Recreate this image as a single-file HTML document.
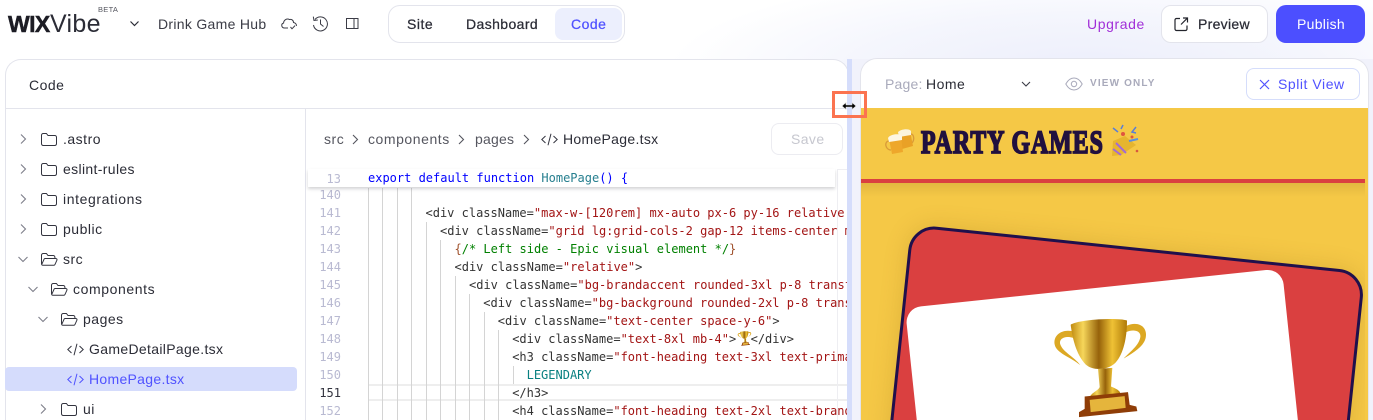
<!DOCTYPE html>
<html><head><meta charset="utf-8">
<style>
html,body{margin:0;padding:0;width:1373px;height:420px;overflow:hidden;background:#fff}
body{position:relative;font-family:"Liberation Sans",sans-serif;color:#2b2c36;font-size:14px;letter-spacing:.5px}
.a{position:absolute}
.t{position:absolute;white-space:nowrap;line-height:18px;height:18px}
.m{-webkit-text-stroke:.25px currentColor}
#code .l{position:absolute;white-space:pre;font-family:"DejaVu Sans Mono",monospace;font-size:12px;letter-spacing:0;line-height:18px;height:18px;color:#333}
#code .n{position:absolute;left:0;width:33px;text-align:right;font-family:"DejaVu Sans Mono",monospace;font-size:12px;letter-spacing:0;line-height:18px;color:#b9bad2}
#code .g{position:absolute;width:1px;background:#d4d4d4}
.s{color:#a31515}.c{color:#008000}.b{color:#a0522d}.k{color:#0000ff}.f{color:#267f8f}
</style></head><body>
<svg width="0" height="0" style="position:absolute"><defs>
<symbol id="fc" viewBox="0 0 16 13"><path d="M.5 2.2A1.7 1.7 0 0 1 2.2.5h3.2l1.6 2h6.800a1.7 1.7 0 0 1 1.7 1.7v6.600a1.7 1.7 0 0 1-1.7 1.7H2.2a1.7 1.7 0 0 1-1.7-1.7z" fill="none" stroke="#33343f"/></symbol>
<symbol id="fo" viewBox="0 0 17 13"><path d="M.5 11V2.2A1.7 1.7 0 0 1 2.2.5h3.2l1.6 2h5.200a1.7 1.7 0 0 1 1.7 1.7v1.300M.7 11.600 3 6.300a1.300 1.300 0 0 1 1.200-.8h10.600c.9 0 1.500.9 1.100 1.700l-1.900 4.200a1.300 1.300 0 0 1-1.200.8H1.600c-.7 0-1.100-.5-.9-1.200z" fill="none" stroke="#33343f"/></symbol>
<linearGradient id="gold" x1="0" x2="1" y1="0" y2="0"><stop offset="0" stop-color="#c08a10"/><stop offset=".22" stop-color="#f6d65a"/><stop offset=".5" stop-color="#96620a"/><stop offset=".74" stop-color="#efc235"/><stop offset="1" stop-color="#b07a08"/></linearGradient>
<symbol id="tr" viewBox="550 290 285 305">
<path d="M608 332C575 325 550 345 555 372 560 398 600 408 632 434 615 410 580 395 572 372 566 352 590 345 610 352Z" fill="#dca823"/>
<path d="M770 316C805 300 835 318 828 352 822 380 785 400 762 414 780 395 808 375 812 350 815 330 790 325 770 335Z" fill="#dca823"/>
<path d="M603 313C620 298 740 290 772 300 772 350 762 400 737 427 715 449 670 452 648 432 618 400 608 350 603 313Z" fill="url(#gold)"/>
<path d="M685 445 728 442 724 498C738 504 752 510 752 520L662 527C668 515 690 508 690 498Z" fill="url(#gold)"/>
<path d="M645 528 775 515 780 553 800 558 803 572 628 590 628 575 645 565Z" fill="#8f3d07"/>
<path d="M660 538 765 527 768 562 663 575Z" fill="#e5b53c"/>
</symbol>
</defs></svg>

<!-- background tint -->
<div class="a" style="left:620px;top:0;width:753px;height:420px;background:radial-gradient(ellipse 420px 100px at 62% 70px,#eceefb 0%,rgba(240,242,252,.7) 55%,rgba(255,255,255,0) 100%)"></div>
<div class="a" style="left:848px;top:59px;width:525px;height:361px;background:#f1f2fb"></div>

<!-- top bar -->
<div class="t" style="left:8px;top:13px;font-size:23px;font-weight:bold;letter-spacing:-.6px;color:#1c1c24;line-height:22px;height:22px;-webkit-text-stroke:.5px #1c1c24">WIX</div>
<div class="t" style="left:50px;top:11px;font-size:25px;letter-spacing:.3px;color:#2b2c36;line-height:26px;height:26px">Vibe</div>
<div class="t" style="left:98px;top:1px;font-size:7.5px;letter-spacing:.3px;color:#55565f">BETA</div>
<svg class="a" style="left:129px;top:20px" width="11" height="8" fill="none" stroke="#2b2c36" stroke-width="1.2"><path d="M1.5 1.5 5.5 5.5 9.5 1.5"/></svg>
<div class="t" style="left:158px;top:15px;letter-spacing:.3px;color:#3b3c46">Drink Game Hub</div>
<svg class="a" style="left:280px;top:15px" width="18" height="16" fill="none" stroke="#3b3c46" stroke-width="1"><path d="M8 13H4.500C1.500 13 .6 9 3.600 8 3.700 5 7 3 9.500 4.600 11 3.800 13.500 5 13.500 7.500 15.500 7.800 16.800 9.500 16.300 11"/><path d="M10.500 12 12 13.800 15 10.600"/></svg>
<svg class="a" style="left:311px;top:15px" width="18" height="17" fill="none" stroke="#3b3c46" stroke-width="1"><path d="M4 4.500A7 7 0 1 1 2.500 10"/><path d="M2.300 1.600 3 5.500 6.800 5"/><path d="M9.500 4.500V9L12.500 11.500"/></svg>
<svg class="a" style="left:346px;top:17px" width="13" height="13" fill="none" stroke="#3b3c46"><rect x=".5" y="1.500" width="11.500" height="10"/><path d="M8 1.500V11.500"/></svg>

<div class="a" style="left:388px;top:5px;width:235px;height:36px;border:1px solid #e3e4ec;border-radius:12px;background:#fff"></div>
<div class="a" style="left:555px;top:8px;width:67px;height:32px;border-radius:8px;background:#eceffd"></div>
<div class="t m" style="left:407px;top:15px;letter-spacing:.5px">Site</div>
<div class="t m" style="left:466px;top:15px;letter-spacing:.4px">Dashboard</div>
<div class="t m" style="left:571px;top:15px;color:#5052ff;letter-spacing:.5px">Code</div>

<div class="t" style="left:1087px;top:15px;color:#a12fd8;letter-spacing:.6px">Upgrade</div>
<div class="a" style="left:1161px;top:5px;width:105px;height:36px;border:1px solid #e3e4ec;border-radius:10px;background:#fff"></div>
<svg class="a" style="left:1174px;top:17px" width="15" height="15" fill="none" stroke="#23242c" stroke-width="1.200"><path d="M6 1.500H2.500A1.500 1.500 0 0 0 1 3V12A1.500 1.500 0 0 0 2.500 13.500H11.500A1.500 1.500 0 0 0 13 12V8.500"/><path d="M9 1H13.500V5.500M13.300 1.200 7 7.500"/></svg>
<div class="t m" style="left:1198px;top:15px;letter-spacing:.3px">Preview</div>
<div class="a" style="left:1276px;top:5px;width:89px;height:38px;border-radius:10px;background:#4c4fff"></div>
<div class="t" style="left:1297px;top:15px;color:#fff;letter-spacing:.3px">Publish</div>

<!-- left panel -->
<div class="a" style="left:5px;top:59px;width:842px;height:360px;border:1px solid #e3e4ec;border-bottom:0;border-radius:16px 16px 0 0;background:#fff"></div>
<div class="a" style="left:5px;top:108px;width:843px;height:1px;background:#e3e4ec"></div>
<div class="a" style="left:305px;top:108px;width:1px;height:312px;background:#e3e4ec"></div>
<div class="t" style="left:29px;top:76px;letter-spacing:.5px">Code</div>

<!-- tree -->
<svg class="a" style="left:0;top:120px" width="305" height="300" fill="none" stroke="#7d7e89" stroke-width="1.100">
<path d="M21 14.500 25.500 19 21 23.500M21 44.500 25.500 49 21 53.500M21 74.500 25.500 79 21 83.500M21 104.500 25.500 109 21 113.500"/>
<path d="M18.500 137 23 141.500 27.500 137M28.500 167 33 171.500 37.500 167M38.500 197 43 201.500 47.500 197"/>
<path d="M41 284.500 45.500 289 41 293.500"/>
</svg>
<svg class="a" style="left:41px;top:133px" width="16" height="13"><use href="#fc"/></svg>
<svg class="a" style="left:41px;top:163px" width="16" height="13"><use href="#fc"/></svg>
<svg class="a" style="left:41px;top:193px" width="16" height="13"><use href="#fc"/></svg>
<svg class="a" style="left:41px;top:223px" width="16" height="13"><use href="#fc"/></svg>
<svg class="a" style="left:41px;top:253px" width="17" height="13"><use href="#fo"/></svg>
<svg class="a" style="left:51px;top:283px" width="17" height="13"><use href="#fo"/></svg>
<svg class="a" style="left:61px;top:313px" width="17" height="13"><use href="#fo"/></svg>
<svg class="a" style="left:61px;top:403px" width="16" height="13"><use href="#fc"/></svg>
<div class="t" style="left:63px;top:130px">.astro</div>
<div class="t" style="left:63px;top:160px;letter-spacing:.35px">eslint-rules</div>
<div class="t" style="left:63px;top:190px;letter-spacing:.6px">integrations</div>
<div class="t" style="left:63px;top:220px">public</div>
<div class="t" style="left:63px;top:250px">src</div>
<div class="t" style="left:73px;top:280px;letter-spacing:.6px">components</div>
<div class="t" style="left:83px;top:310px">pages</div>
<svg class="a" style="left:67px;top:343px" width="17" height="13" fill="none" stroke="#33343f" stroke-width="1"><path d="M4.500 3 .8 6.500 4.500 10M12.500 3 16.200 6.500 12.500 10M10 .8 7 12.200"/></svg>
<div class="t" style="left:89px;top:340px;letter-spacing:.33px">GameDetailPage.tsx</div>
<div class="a" style="left:5px;top:367px;width:292px;height:24px;background:#d5dcfc;border-radius:4px"></div>
<svg class="a" style="left:67px;top:373px" width="17" height="13" fill="none" stroke="#5052ff" stroke-width="1"><path d="M4.500 3 .8 6.500 4.500 10M12.500 3 16.200 6.500 12.500 10M10 .8 7 12.200"/></svg>
<div class="t" style="left:89px;top:370px;color:#5052ff;letter-spacing:.3px">HomePage.tsx</div>
<div class="t" style="left:83px;top:400px">ui</div>

<!-- breadcrumbs -->
<div class="t" style="left:324px;top:130px;color:#55565f;letter-spacing:.55px">src</div>
<div class="t" style="left:368px;top:130px;color:#55565f;letter-spacing:.55px">components</div>
<div class="t" style="left:475px;top:130px;color:#55565f;letter-spacing:.2px">pages</div>
<svg class="a" style="left:352px;top:133px" width="180" height="13" fill="none" stroke="#55565f" stroke-width="1.100"><path d="M1 2 5.500 6.500 1 11M107 2 111.500 6.500 107 11M172 2 176.500 6.500 172 11"/></svg>
<svg class="a" style="left:541px;top:133px" width="17" height="13" fill="none" stroke="#33343f" stroke-width="1"><path d="M4.500 3 .8 6.500 4.500 10M12.500 3 16.200 6.500 12.500 10M10 .8 7 12.200"/></svg>
<div class="t" style="left:563px;top:130px;letter-spacing:.3px">HomePage.tsx</div>
<div class="a" style="left:771px;top:123px;width:70px;height:30px;border:1px solid #ececf1;border-radius:8px"></div>
<div class="t" style="left:791px;top:130px;color:#c6c7cf;letter-spacing:.4px">Save</div>

<!-- code -->
<div id="code" class="a" style="left:0;top:0;width:851px;height:420px;overflow:hidden;pointer-events:none">
<div class="a" style="left:368px;top:384px;width:483px;height:17px;box-sizing:border-box;border-top:2px solid #eee;border-bottom:2px solid #eee"></div>
<div class="g" style="left:368px;top:188px;height:232px"></div>
<div class="g" style="left:382px;top:188px;height:232px"></div>
<div class="g" style="left:397px;top:188px;height:232px"></div>
<div class="g" style="left:411px;top:188px;height:232px"></div>
<div class="g" style="left:426px;top:222px;height:198px"></div>
<div class="g" style="left:440px;top:240px;height:180px"></div>
<div class="g" style="left:455px;top:276px;height:144px"></div>
<div class="g" style="left:469px;top:294px;height:126px"></div>
<div class="g" style="left:484px;top:312px;height:108px"></div>
<div class="g" style="left:498px;top:330px;height:90px"></div>
<div class="g" style="left:513px;top:366px;height:18px"></div>
<div class="a" style="left:837px;top:169px;width:1px;height:251px;background:#eeeef2"></div>
<div class="a" style="left:837px;top:169px;width:14px;height:1px;background:#eeeef2"></div>

<div class="n" style="left:308px;top:186px">140</div>
<div class="n" style="left:308px;top:204px">141</div>
<div class="n" style="left:308px;top:222px">142</div>
<div class="n" style="left:308px;top:240px">143</div>
<div class="n" style="left:308px;top:258px">144</div>
<div class="n" style="left:308px;top:276px">145</div>
<div class="n" style="left:308px;top:294px">146</div>
<div class="n" style="left:308px;top:312px">147</div>
<div class="n" style="left:308px;top:330px">148</div>
<div class="n" style="left:308px;top:348px">149</div>
<div class="n" style="left:308px;top:366px">150</div>
<div class="n" style="left:308px;top:384px;color:#33343f">151</div>
<div class="n" style="left:308px;top:402px">152</div>

<div class="l" style="left:425.500px;top:204px">&lt;div className=<span class="s">"max-w-[120rem] mx-auto px-6 py-16 relative overflow"</span></div>
<div class="l" style="left:440px;top:222px">&lt;div className=<span class="s">"grid lg:grid-cols-2 gap-12 items-center min-h"</span></div>
<div class="l" style="left:454.500px;top:240px"><span class="b">{</span><span class="c">/* Left side - Epic visual element */</span><span class="b">}</span></div>
<div class="l" style="left:454.500px;top:258px">&lt;div className=<span class="s">"relative"</span>&gt;</div>
<div class="l" style="left:469px;top:276px">&lt;div className=<span class="s">"bg-brandaccent rounded-3xl p-8 transform"</span></div>
<div class="l" style="left:483.300px;top:294px">&lt;div className=<span class="s">"bg-background rounded-2xl p-8 transform"</span></div>
<div class="l" style="left:497.800px;top:312px">&lt;div className=<span class="s">"text-center space-y-6"</span>&gt;</div>
<div class="l" style="left:512.200px;top:330px">&lt;div className=<span class="s">"text-8xl mb-4"</span>&gt;<span style="display:inline-block;width:14.440px"></span>&lt;/div&gt;</div>
<svg class="a" style="left:737px;top:331px" width="15" height="15"><use href="#tr"/></svg>
<div class="l" style="left:512.200px;top:348px">&lt;h3 className=<span class="s">"font-heading text-3xl text-primary"</span></div>
<div class="l" style="left:526.600px;top:366px;color:#098081">LEGENDARY</div>
<div class="l" style="left:512.200px;top:384px">&lt;/h3&gt;</div>
<div class="l" style="left:512.200px;top:402px">&lt;h4 className=<span class="s">"font-heading text-2xl text-brandaccent"</span></div>

<div class="a" style="left:308px;top:169px;width:527px;height:18px;background:#fff;box-shadow:0 2px 3px rgba(60,60,70,.22)"></div>
<div class="n" style="left:308px;top:170px">13</div>
<div class="l" style="left:368px;top:169px"><span class="k">export default function</span> <span class="f">HomePage</span><span class="k">() {</span></div>
</div>

<div class="a" style="left:847px;top:59px;width:5px;height:361px;background:#d5ddfb"></div>

<!-- right panel -->
<div class="a" style="left:861px;top:59px;width:507px;height:361px;border-radius:16px 16px 0 0;overflow:hidden;background:#fff;box-shadow:0 0 0 1px #e3e4ec">
 <div class="a" style="left:0;top:49px;width:507px;height:312px;background:#f5c846"></div>
 <div class="a" style="left:0;top:120px;width:507px;height:4px;background:#da4040"></div>
 <div class="a" style="left:0;top:124px;width:507px;height:14px;background:linear-gradient(#e2b740,rgba(245,200,70,0))"></div>
 <div class="a" style="left:49.500px;top:165px;width:457px;height:500px;box-sizing:border-box;border:3.500px solid #20104c;border-radius:26px;background:#da4040;transform-origin:0 0;transform:rotate(6deg);box-shadow:0 0 24px rgba(120,80,0,.18)"></div>
 <div class="a" style="left:44px;top:248.500px;width:379px;height:400px;border-radius:16px;background:#fff;transform-origin:0 0;transform:rotate(-6deg)"></div>
</div>
<div class="t" style="left:885px;top:75px;color:#a9aabb;letter-spacing:.2px">Page:</div>
<div class="t" style="left:926px;top:75px;letter-spacing:.5px">Home</div>
<svg class="a" style="left:1021px;top:81px" width="10" height="7" fill="none" stroke="#3b3c46" stroke-width="1.100"><path d="M1 1 5 5 9 1"/></svg>
<svg class="a" style="left:1065px;top:77px" width="18" height="14" fill="none" stroke="#a9aabb" stroke-width="1"><path d="M.8 7C3 3 6 1 9 1S15 3 17.200 7C15 11 12 13 9 13S3 11 .8 7Z"/><circle cx="9" cy="7" r="2.700"/></svg>
<div class="t" style="left:1090px;top:75px;font-size:10px;font-weight:bold;letter-spacing:1.150px;color:#a9aabb">VIEW ONLY</div>
<div class="a" style="left:1246px;top:68px;width:112px;height:30px;border:1px solid #d5ddfb;border-radius:8px;background:#fff"></div>
<svg class="a" style="left:1259px;top:79px" width="11" height="11" stroke="#5052ff" stroke-width="1.200"><path d="M1 1 10 10M10 1 1 10"/></svg>
<div class="t" style="left:1278px;top:75px;color:#5052ff;letter-spacing:.55px">Split View</div>

<!-- hero header -->
<div class="t" style="left:921px;top:126px;height:34px;line-height:34px;font-family:'Liberation Serif',serif;font-weight:bold;font-size:33px;letter-spacing:1.450px;color:#21103f;-webkit-text-stroke:1.800px #21103f;transform-origin:0 50%;transform:scaleX(.72)">PARTY GAMES</div>
<svg class="a" style="left:880px;top:120px" width="270" height="45">
 <g fill="none" stroke="#d99a38" stroke-width="1.300"><path d="M30 14C35 13 35 23 30 24"/><path d="M9 21C4 21 5 30 11 30"/></g>
 <path d="M19 13 30 11 33 26 22 29Z" fill="#e9a126"/><path d="M18 12C21 9 29 8 31 11L31 15 19 17Z" fill="#fbf3de"/>
 <path d="M9 19 21 17 23 32 12 34Z" fill="#eea72b"/><path d="M8 18C10 14 20 13 22 16L22 20 9 22Z" fill="#fdf6e4"/>
 <g>
 <path d="M233 21 245 16 256 25 241 35 232 36Z" fill="#e6b52f"/><path d="M236 23 246 33M233 29 241 35" stroke="#a26ad6" stroke-width="2" fill="none"/>
 <circle cx="243" cy="14" r="2" fill="#e0553f"/><circle cx="252" cy="17" r="1.500" fill="#e0553f"/><circle cx="257" cy="31" r="1.300" fill="#d8583f"/>
 <path d="M233 8 238 12M243 5 241 9M256 7 252 12 256 13" stroke="#5a7fd6" stroke-width="1.500" fill="none"/><path d="M249 21 258 19" stroke="#5a8fe0" stroke-width="2"/>
 </g>
</svg>

<!-- big trophy -->
<svg class="a" style="left:1053px;top:317px" width="95" height="102"><use href="#tr"/></svg>

<div class="a" style="left:1365px;top:108px;width:3px;height:312px;background:#f5c846"></div>

<!-- orange box + cursor -->
<div class="a" style="left:832px;top:91px;width:29px;height:21px;border:3px solid #fb7350"></div>
<svg class="a" style="left:841px;top:100px" width="16" height="12"><path d="M1 6 5 2.500V5H11V2.500L15 6 11 9.500V7H5V9.500Z" fill="#000" stroke="#ddd" stroke-width=".6"/></svg>
</body></html>
